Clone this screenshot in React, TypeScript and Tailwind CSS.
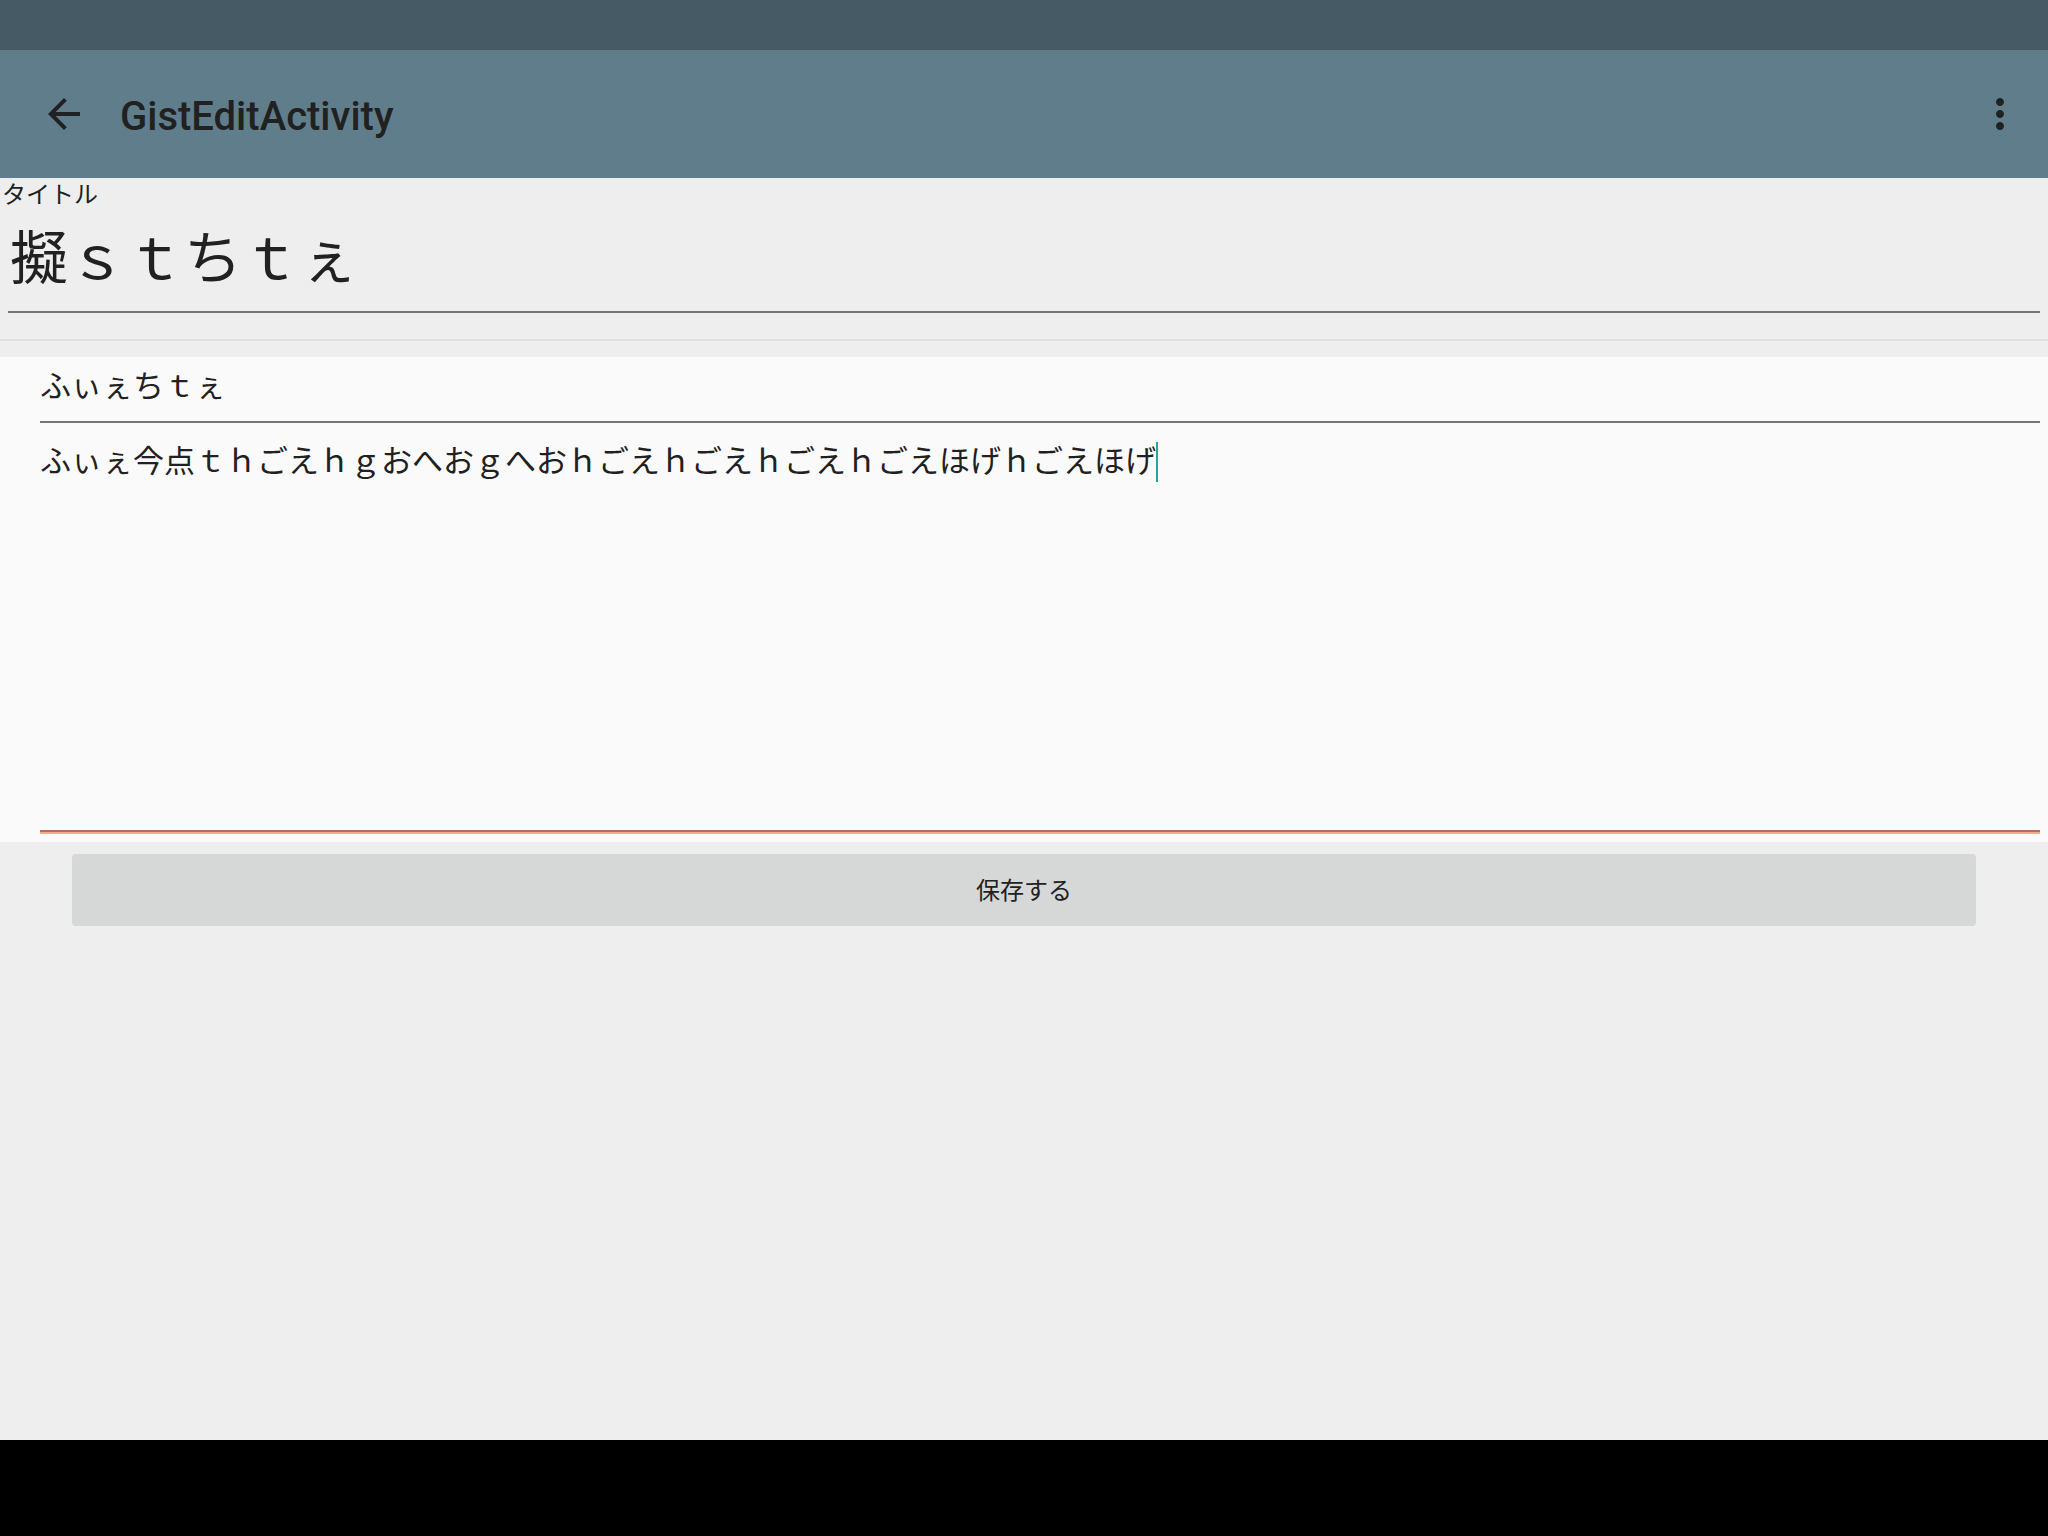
import React from "react";

const font = "font-['Roboto','Noto_Sans_CJK_JP',sans-serif]";

function BackIcon() {
  return (
    <svg width="48" height="48" viewBox="0 0 24 24" className="fill-[#212121]">
      <path d="M20 11H7.83l5.59-5.59L12 4l-8 8 8 8 1.41-1.41L7.83 13H20v-2z" />
    </svg>
  );
}

function MoreIcon() {
  return (
    <svg width="48" height="48" viewBox="0 0 24 24" className="fill-[#212121]">
      <path d="M12 8c1.1 0 2-.9 2-2s-.9-2-2-2-2 .9-2 2 .9 2 2 2zm0 2c-1.1 0-2 .9-2 2s.9 2 2 2 2-.9 2-2-.9-2-2-2zm0 6c-1.1 0-2 .9-2 2s.9 2 2 2 2-.9 2-2-.9-2-2-2z" />
    </svg>
  );
}

export default function App() {
  return (
    <div className={`w-[2048px] h-[1536px] flex flex-col bg-[#eeeeee] text-[#212121] ${font}`}>
      {/* status bar */}
      <div className="h-[50px] bg-[#455a64]" />

      {/* toolbar */}
      <div className="h-[128px] bg-[#607d8b] flex items-center pl-[40px] pr-[24px]">
        <BackIcon />
        <h1 className="ml-[32px] mt-[5px] text-[40px] leading-[48px] font-medium">GistEditActivity</h1>
        <div className="flex-1" />
        <MoreIcon />
      </div>

      {/* title field */}
      <div className="flex flex-col">
        <p className="mt-[3px] pl-[2px] text-[24px] leading-[28px]">タイトル</p>
        <div className="mt-[15px] pl-[10px] text-[58px] leading-[70px]">擬ｓｔちｔぇ</div>
        <div className="mt-[17px] mx-[8px] h-[2px] bg-[#757575]" />
        <div className="mt-[26px] h-[2px] bg-[#e0e0e0]" />
      </div>

      {/* content panel */}
      <div className="mt-[16px] bg-[#fafafa] flex flex-col pt-[10px] pb-[8px]">
        <div className="pl-[40px] text-[31px] leading-[40px]">ふぃぇちｔぇ</div>
        <div className="mt-[14px] ml-[40px] mr-[8px] h-[2px] bg-[#757575]" />
        <div className="mt-[19px] pl-[40px] text-[31px] leading-[40px] flex items-center">
          <span>ふぃぇ今点ｔｈごえｈｇおへおｇへおｈごえｈごえｈごえｈごえほげｈごえほげ</span>
          <span className="w-[2px] h-[40px] bg-[#26a69a]" />
        </div>
        <div className="mt-[348px] ml-[40px] mr-[8px] flex flex-col">
          <div className="h-[2px] bg-[#b26e5a]" />
          <div className="h-[2px] bg-[#f6a88e]" />
        </div>
      </div>

      {/* save button */}
      <div className="mt-[12px] mx-[72px] h-[72px] rounded-[4px] bg-[#d6d7d7] flex items-center justify-center">
        <span className="mt-[2px] text-[24px] leading-[32px]">保存する</span>
      </div>

      <div className="flex-1" />

      {/* nav bar */}
      <div className="h-[96px] bg-black" />
    </div>
  );
}
